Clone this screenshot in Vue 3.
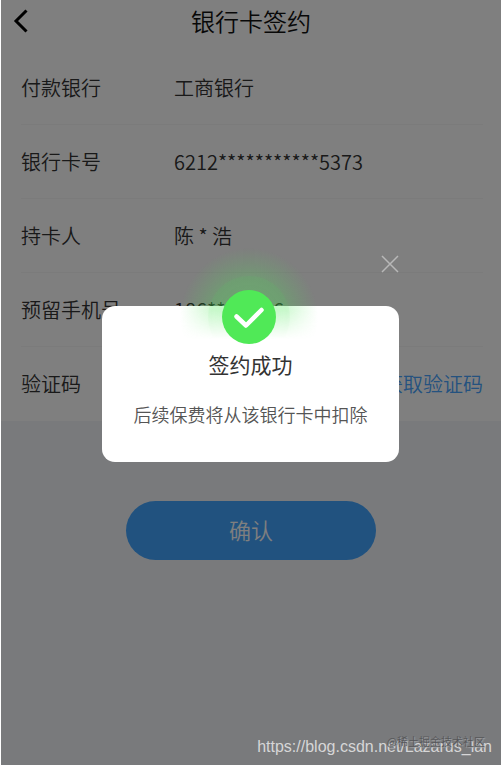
<script setup>
import { ref } from 'vue'

const open = ref(true)
const rows = [
  { label: '付款银行', value: '工商银行' },
  { label: '银行卡号', value: '6212***********5373' },
  { label: '持卡人', value: '陈 * 浩' },
  { label: '预留手机号', value: '186******66' }
]
</script>

<template>
  <div class="screen">
    <header class="bar">
      <button class="back" type="button" aria-label="返回">
        <svg viewBox="0 0 16 26" width="16" height="26">
          <path d="M13.500 2.500 3 13l10.500 10.500" fill="none" stroke="#000" stroke-width="3" />
        </svg>
      </button>
      <h1>银行卡签约</h1>
    </header>

    <main>
      <section class="form">
        <div v-for="row in rows" :key="row.label" class="row">
          <span class="label">{{ row.label }}</span>
          <span class="value">{{ row.value }}</span>
        </div>
        <div class="row">
          <label class="label" for="code">验证码</label>
          <input id="code" class="code" type="text" />
          <button class="send" type="button">获取验证码</button>
        </div>
      </section>
      <button class="confirm" type="button">确认</button>
    </main>

    <div v-if="open" class="mask">
      <div class="popup">
        <button class="close" type="button" aria-label="关闭" @click="open = false">
          <svg viewBox="0 0 18 18" width="18" height="18">
            <path d="M1 1 17 17M17 1 1 17" fill="none" stroke="#b8b8b8" stroke-width="1.500" />
          </svg>
        </button>
        <div class="dialog" role="dialog" aria-labelledby="done-title">
          <svg class="badge" viewBox="0 0 140 140" width="140" height="140">
            <defs>
              <radialGradient id="halo">
                <stop offset="0" stop-color="#4de855" stop-opacity=".32" />
                <stop offset=".55" stop-color="#4de855" stop-opacity=".25" />
                <stop offset=".78" stop-color="#4de855" stop-opacity=".12" />
                <stop offset="1" stop-color="#4de855" stop-opacity="0" />
              </radialGradient>
              <linearGradient id="fade" x1="0" y1="0" x2="0" y2="1">
                <stop offset=".45" stop-color="#fff" />
                <stop offset=".66" stop-color="#000" />
              </linearGradient>
              <mask id="upper"><rect width="140" height="140" fill="url(#fade)" /></mask>
            </defs>
            <g mask="url(#upper)">
              <circle cx="70" cy="70" r="69" fill="url(#halo)" />
              <circle cx="70" cy="70" r="41" fill="#4de855" fill-opacity=".08" />
            </g>
            <circle cx="70" cy="70" r="27" fill="#50e957" />
            <path d="M57.500 69.500 67 78.500 82.500 63" fill="none" stroke="#fff" stroke-width="4.500" stroke-linecap="round" stroke-linejoin="round" />
          </svg>
          <h2 id="done-title">签约成功</h2>
          <p>后续保费将从该银行卡中扣除</p>
        </div>
      </div>
    </div>

    <div class="source">https://blog.csdn.net/Lazarus_lan</div>
    <div class="community">@稀土掘金技术社区</div>
  </div>
</template>

<style>
body {
  background: #fff;
}
</style>

<style scoped>
* {
  box-sizing: border-box;
}

.screen {
  position: relative;
  display: flex;
  flex-direction: column;
  min-height: 100vh;
  margin-left: 1px;
  background: #f2f5f9;
  color: #333;
  font-family: "Noto Sans CJK SC", sans-serif;
  font-size: 20px;
  font-weight: 350;
  line-height: 28px;
}

button {
  padding: 0;
  border: 0;
  background: none;
  font: inherit;
  cursor: pointer;
}

svg {
  display: block;
}

.bar {
  display: grid;
  grid-template-columns: 28px 1fr 28px;
  align-items: center;
  height: 51px;
  padding: 0 12px 9px;
  background: #fff;
}

.bar h1 {
  margin: 0;
  color: #111;
  font-size: 24px;
  font-weight: inherit;
  text-align: center;
}

main {
  display: flex;
  flex-direction: column;
}

.form {
  padding: 0 18px 0 20px;
  background: #fff;
}

.row {
  display: flex;
  align-items: center;
  height: 74px;
  border-bottom: 1px solid #f6f6f6;
}

.row:last-child {
  border-bottom: 0;
}

.label {
  flex: 0 0 153px;
}

.code {
  flex: 1;
  min-width: 0;
  height: 40px;
  padding: 0;
  border: 0;
  outline: 0;
  background: none;
  font: inherit;
}

.send {
  color: #48a4ff;
}

.confirm {
  align-self: center;
  width: 50%;
  height: 59px;
  margin-top: 80px;
  padding-bottom: 3px;
  border-radius: 30px;
  background: #42a4ff;
  color: #fff;
  font-size: 22px;
}

.mask {
  position: absolute;
  inset: 0;
  display: flex;
  justify-content: center;
  align-items: flex-start;
  padding: 255px 102px 0 101px;
  background: rgba(0, 0, 0, .5);
}

.popup {
  display: flex;
  flex-direction: column;
  flex: 1;
  gap: 33px;
}

.close {
  align-self: flex-end;
}

.dialog {
  position: relative;
  height: 156px;
  padding: 42px 16px 0;
  border-radius: 13px;
  background: #fff;
  text-align: center;
}

.badge {
  position: absolute;
  top: -59px;
  left: calc(50% - 72px);
}

.dialog h2 {
  position: relative;
  margin: 0;
  color: #333;
  font-size: 21px;
  font-weight: 400;
  line-height: 32px;
}

.dialog p {
  margin: 20px 0 0;
  color: #555;
  font-size: 18px;
}

.community,
.source {
  position: absolute;
  white-space: nowrap;
}

.community {
  right: 16px;
  bottom: 15px;
  color: #56575a;
  font-size: 11px;
  line-height: 18px;
  text-shadow: 1px 1px 1px #a5a6a8;
}

.source {
  right: 9px;
  bottom: 8px;
  color: #d6d6d7;
  font-family: "Liberation Sans", sans-serif;
  font-size: 16px;
  line-height: 20px;
}
</style>
